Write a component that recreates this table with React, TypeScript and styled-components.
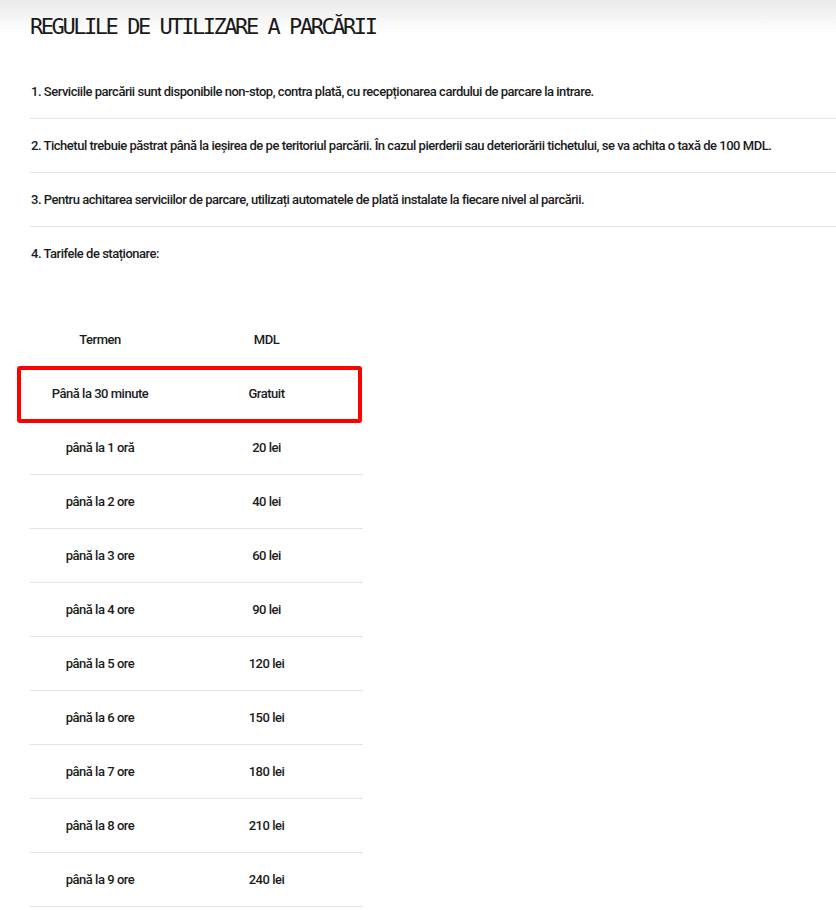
import styled, { createGlobalStyle } from "styled-components";

const GlobalStyle = createGlobalStyle`
  body {
    margin: 0;
    background: #fff;
    color: #1c1c1c;
    font-family: "Roboto", "Liberation Sans", sans-serif;
  }
`;

const Page = styled.div`
  min-height: 910px;
  background: linear-gradient(#ebebeb, #fff 34px) no-repeat;
  padding-left: 30px;
  box-sizing: border-box;
`;

const Title = styled.h1`
  margin: 0;
  padding-top: 12px;
  height: 65px;
  box-sizing: border-box;
  line-height: 30px;
  font-family: "DejaVu Sans Mono", "Liberation Mono", monospace;
  font-size: 22px;
  font-weight: 400;
  letter-spacing: -2.45px;
  color: #1a1a1a;
`;

const Rules = styled.ol`
  list-style: none;
  margin: 0;
  padding: 0;
`;

const Rule = styled.li<{ $last?: boolean }>`
  height: 54px;
  box-sizing: border-box;
  display: flex;
  align-items: center;
  padding-left: 1px;
  font-size: 13px;
  font-weight: 500;
  letter-spacing: -0.48px;
  border-bottom: 1px solid ${(p) => (p.$last ? "transparent" : "#e4e4e4")};
`;

const Table = styled.div`
  margin-top: 32px;
  width: 333px;
  font-size: 13px;
  font-weight: 500;
  letter-spacing: -0.48px;
`;

const Row = styled.div<{ $head?: boolean; $marked?: boolean }>`
  position: relative;
  display: grid;
  grid-template-columns: 140px 193px;
  height: 54px;
  align-items: center;
  box-sizing: border-box;
  border-bottom: 1px solid ${(p) => (p.$head ? "transparent" : "#e4e4e4")};

  ${(p) =>
    p.$marked &&
    `
    &::after {
      content: "";
      position: absolute;
      left: -13px;
      right: 1px;
      top: -1px;
      bottom: -3px;
      border: 4px solid #ff0000;
      border-radius: 3px;
    }
  `}
`;

const Cell = styled.div`
  text-align: center;
`;

const rules = [
  "1. Serviciile parcării sunt disponibile non-stop, contra plată, cu recepționarea cardului de parcare la intrare.",
  "2. Tichetul trebuie păstrat până la ieșirea de pe teritoriul parcării. În cazul pierderii sau deteriorării tichetului, se va achita o taxă de 100 MDL.",
  "3. Pentru achitarea serviciilor de parcare, utilizați automatele de plată instalate la fiecare nivel al parcării.",
  "4. Tarifele de staționare:",
];

const tariffs: [string, string][] = [
  ["Până la 30 minute", "Gratuit"],
  ["până la 1 oră", "20 lei"],
  ["până la 2 ore", "40 lei"],
  ["până la 3 ore", "60 lei"],
  ["până la 4 ore", "90 lei"],
  ["până la 5 ore", "120 lei"],
  ["până la 6 ore", "150 lei"],
  ["până la 7 ore", "180 lei"],
  ["până la 8 ore", "210 lei"],
  ["până la 9 ore", "240 lei"],
];

export default function App() {
  return (
    <Page>
      <GlobalStyle />
      <Title>REGULILE DE UTILIZARE A PARCĂRII</Title>
      <Rules>
        {rules.map((r, i) => (
          <Rule key={i} $last={i === rules.length - 1}>
            {r}
          </Rule>
        ))}
      </Rules>
      <Table>
        <Row $head>
          <Cell>Termen</Cell>
          <Cell>MDL</Cell>
        </Row>
        {tariffs.map(([term, price], i) => (
          <Row key={term} $marked={i === 0}>
            <Cell>{term}</Cell>
            <Cell>{price}</Cell>
          </Row>
        ))}
      </Table>
    </Page>
  );
}
